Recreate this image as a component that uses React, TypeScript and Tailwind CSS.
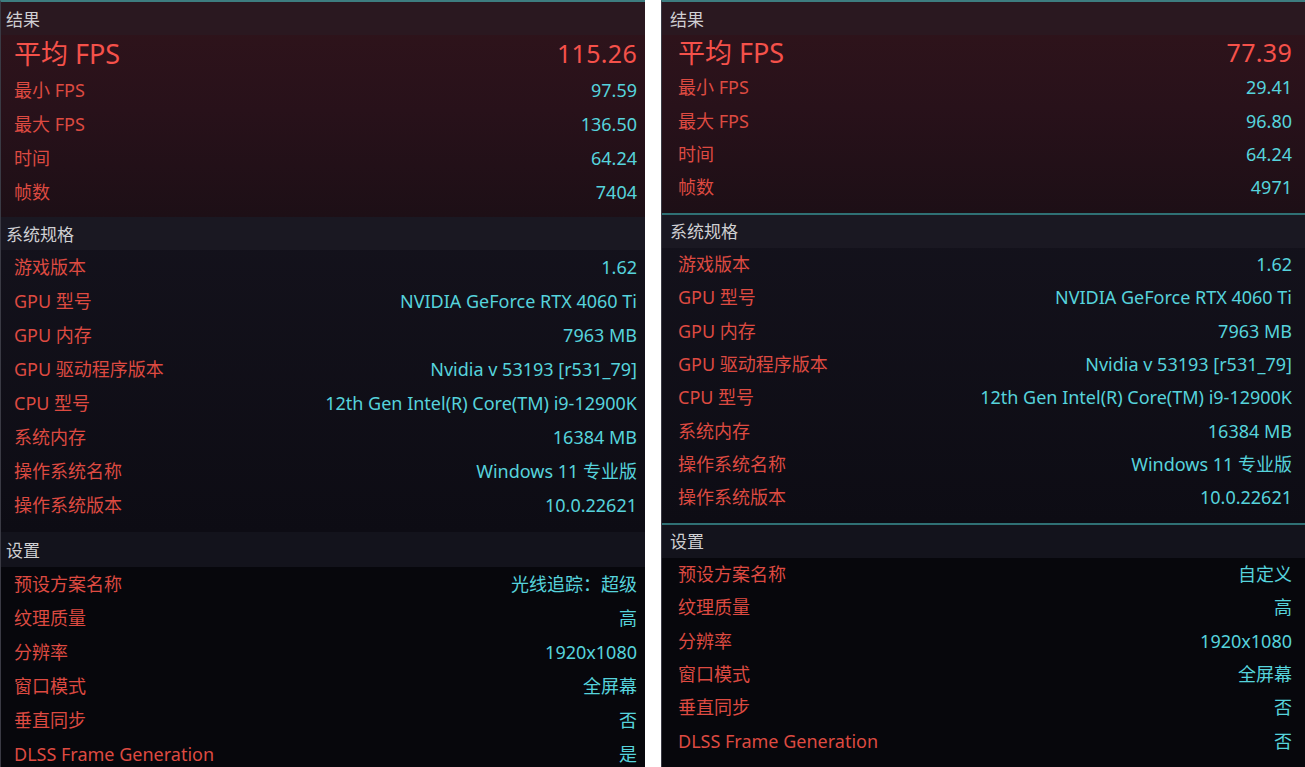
import React from "react";

type Row = { label: string; value: string };

interface Panel {
  avg: string;
  results: Row[];
  system: Row[];
  settings: Row[];
}

const LEFT: Panel = {
  avg: "115.26",
  results: [
    { label: "最小 FPS", value: "97.59" },
    { label: "最大 FPS", value: "136.50" },
    { label: "时间", value: "64.24" },
    { label: "帧数", value: "7404" },
  ],
  system: [
    { label: "游戏版本", value: "1.62" },
    { label: "GPU 型号", value: "NVIDIA GeForce RTX 4060 Ti" },
    { label: "GPU 内存", value: "7963 MB" },
    { label: "GPU 驱动程序版本", value: "Nvidia v 53193 [r531_79]" },
    { label: "CPU 型号", value: "12th Gen Intel(R) Core(TM) i9-12900K" },
    { label: "系统内存", value: "16384 MB" },
    { label: "操作系统名称", value: "Windows 11 专业版" },
    { label: "操作系统版本", value: "10.0.22621" },
  ],
  settings: [
    { label: "预设方案名称", value: "光线追踪：超级" },
    { label: "纹理质量", value: "高" },
    { label: "分辨率", value: "1920x1080" },
    { label: "窗口模式", value: "全屏幕" },
    { label: "垂直同步", value: "否" },
    { label: "DLSS Frame Generation", value: "是" },
  ],
};

const RIGHT: Panel = {
  avg: "77.39",
  results: [
    { label: "最小 FPS", value: "29.41" },
    { label: "最大 FPS", value: "96.80" },
    { label: "时间", value: "64.24" },
    { label: "帧数", value: "4971" },
  ],
  system: LEFT.system,
  settings: [
    { label: "预设方案名称", value: "自定义" },
    { label: "纹理质量", value: "高" },
    { label: "分辨率", value: "1920x1080" },
    { label: "窗口模式", value: "全屏幕" },
    { label: "垂直同步", value: "否" },
    { label: "DLSS Frame Generation", value: "否" },
  ],
};

// two slightly different scales, as in the screenshot
const SIZES = {
  left: {
    head: "h-[33px] pl-[5px] pt-[2px]",
    lastHead: "h-[35px] pl-[5px] pt-[3px]",
    big: "h-[38px] pl-[13px] pr-[8px]",
    row: "h-[34px] pl-[13px] pr-[8px]",
    pad: "h-[8px]",
    sysPad: "h-[10px]",
  },
  right: {
    head: "h-[33px] pl-[8px] pt-[2px]",
    lastHead: "h-[33px] pl-[8px] pt-[2px]",
    big: "h-[36px] pl-[16px] pr-[13px]",
    row: "h-[33.4px] pl-[16px] pr-[13px]",
    pad: "h-[8px]",
    sysPad: "h-[8px]",
  },
};

function Header({ title, cls, bg }: { title: string; cls: string; bg: string }) {
  return (
    <div className={`flex items-center text-[17px] text-[#cfcfd2] ${cls} ${bg}`}>{title}</div>
  );
}

function Line({ row, cls }: { row: Row; cls: string }) {
  return (
    <div className={`flex items-center justify-between text-[18px] ${cls}`}>
      <span className="text-[#dd4a41]">{row.label}</span>
      <span className="text-[#56d3dc]">{row.value}</span>
    </div>
  );
}

function ResultPanel({ data, side }: { data: Panel; side: "left" | "right" }) {
  const s = SIZES[side];
  return (
    <div className="flex flex-col overflow-hidden border-l border-[#3a3a44] border-t-2 border-t-[#3d7d80]">
      {/* 结果 */}
      <div className="bg-gradient-to-b from-[#30141b] via-[#28111a] to-[#1d0f16]">
        <Header title="结果" cls={s.head} bg="bg-[#2a1820]" />
        <div className={`flex items-center justify-between ${s.big}`}>
          <span className="text-[27px] text-[#f5514a]">平均 FPS</span>
          <span className="text-[25px] text-[#f5514a] tracking-[0.3px]">{data.avg}</span>
        </div>
        {data.results.map((r) => (
          <Line key={r.label} row={r} cls={s.row} />
        ))}
        <div className={s.pad} />
      </div>
      <div className="h-[2px] bg-[#2f7074]" />

      {/* 系统规格 */}
      <div className="bg-gradient-to-b from-[#14121c] to-[#0d0c14]">
        <Header title="系统规格" cls={s.head} bg="bg-[#1a1822]" />
        {data.system.map((r) => (
          <Line key={r.label} row={r} cls={s.row} />
        ))}
        <div className={s.sysPad} />
      </div>
      <div className="h-[2px] bg-[#2f7074]" />

      {/* 设置 */}
      <div className="bg-[#07070c] grow">
        <Header title="设置" cls={s.lastHead} bg="bg-[#13131c]" />
        {data.settings.map((r) => (
          <Line key={r.label} row={r} cls={s.row} />
        ))}
      </div>
    </div>
  );
}

export default function App() {
  return (
    <div
      className="w-[1305px] h-[767px] overflow-hidden bg-white grid grid-cols-[645px_644px] gap-x-[16px]"
      style={{ fontFamily: '"Noto Sans", "Noto Sans CJK SC", sans-serif' }}
    >
      <ResultPanel data={LEFT} side="left" />
      <ResultPanel data={RIGHT} side="right" />
    </div>
  );
}
